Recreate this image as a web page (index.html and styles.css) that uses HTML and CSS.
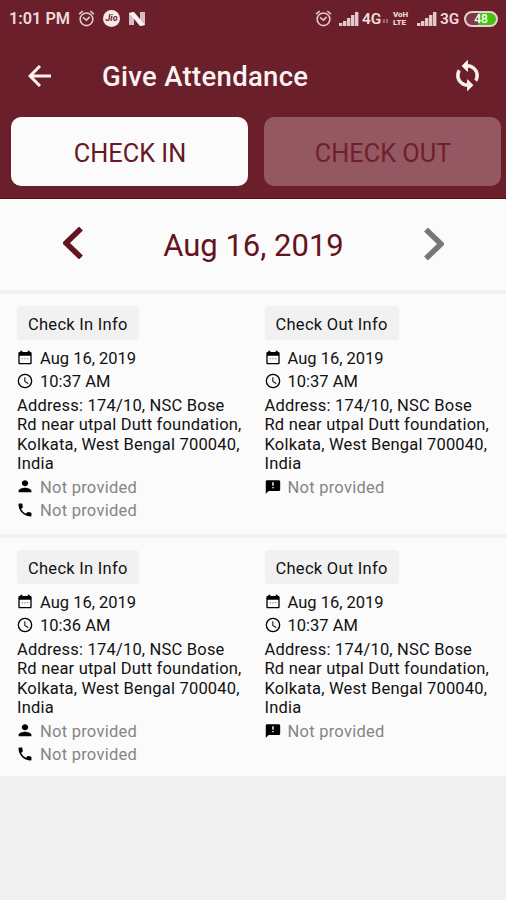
FILE: index.html
```
<!DOCTYPE html>
<html lang="en">
<head>
<meta charset="utf-8">
<title>Give Attendance</title>
<link rel="stylesheet" href="styles.css">
</head>
<body>
<svg class="defs" width="0" height="0">
  <symbol id="alarm" viewBox="0 0 24 24"><path d="M22 5.7l-4.6-3.9-1.3 1.5 4.6 3.9L22 5.7zM7.9 3.4L6.6 1.9 2 5.7l1.3 1.5 4.6-3.8zM12 4a9 9 0 1 0 0 18 9 9 0 0 0 0-18zm0 16a7 7 0 1 1 0-14 7 7 0 0 1 0 14z"/><path d="M7.500 10.500l4.500 3.500 4-4" fill="none" stroke="currentColor" stroke-width="2"/></symbol>
  <symbol id="signal" viewBox="0 0 20 15"><path d="M0 12h3.400v3H0zM4 10h3.400v5H4zM8 7h3.400v8H8zM12 4h3.400v11h-3.400zM16 1h3.400v14h-3.400z"/></symbol>
  <symbol id="calendar" viewBox="0 0 24 24"><path d="M20 3h-1V1h-3v2H8V1H5v2H4c-1.100 0-2 .9-2 2v14.500c0 1.100.9 2 2 2h16c1.100 0 2-.9 2-2V5c0-1.100-.9-2-2-2zm0 16.500H4V8.500h16v11z"/><path d="M7 12h2v2H7zM11 12h2v2h-2zM15 12h2v2h-2z" opacity=".4"/></symbol>
  <symbol id="clock" viewBox="0 0 24 24"><path d="M12 1a11 11 0 1 0 0 22 11 11 0 0 0 0-22zm0 20a9 9 0 1 1 0-18 9 9 0 0 1 0 18zm.5-14.500H11v6.500l5.500 3.400.8-1.300-4.800-2.900z"/></symbol>
  <symbol id="person" viewBox="0 0 24 24"><path d="M12 12c2.200 0 4-1.800 4-4s-1.800-4-4-4-4 1.800-4 4 1.800 4 4 4zm0 2c-2.700 0-8 1.300-8 4v2h16v-2c0-2.700-5.300-4-8-4z" transform="translate(-2.400 -2.500) scale(1.200 1.120)"/></symbol>
  <symbol id="phone" viewBox="0 0 24 24"><path d="M20 15.500c-1.200 0-2.400-.2-3.600-.6-.3-.1-.7 0-1 .2l-2.200 2.200a15 15 0 0 1-6.600-6.600l2.200-2.200c.3-.3.400-.7.200-1-.3-1.100-.5-2.300-.5-3.500 0-.6-.4-1-1-1H4c-.6 0-1 .4-1 1 0 9.400 7.600 17 17 17 .6 0 1-.4 1-1v-3.500c0-.6-.4-1-1-1z" transform="translate(-1 -1) scale(1.080)"/></symbol>
  <symbol id="feedback" viewBox="0 0 24 24"><path d="M20 2H4c-1.100 0-2 .9-2 2v18l4-4h14c1.100 0 2-.9 2-2V4c0-1.100-.9-2-2-2zm-7 12h-2v-2h2v2zm0-4h-2V5h2v5z" transform="translate(-1 0) scale(1.080 1)"/></symbol>
</svg>

<header class="header">
  <div class="status">
    <span class="status-time">1:01 PM</span>
    <svg class="ic-alarm"><use href="#alarm"/></svg>
    <span class="jio">Jio</span>
    <svg class="ic-n" viewBox="0 0 16 14"><path d="M0 1l5-1v13H0z" opacity=".75"/><path d="M11 0h5v13l-5 1z" opacity=".75"/><path d="M0 1l5-1 11 13-5 1z"/></svg>
    <span class="spacer"></span>
    <svg class="ic-alarm right"><use href="#alarm"/></svg>
    <svg class="ic-signal"><use href="#signal"/></svg>
    <span class="net net-4g">4G</span>
    <svg class="activity" viewBox="0 0 6 6"><path d="M0 1h2v4H0zM3 1h2v4H3z"/></svg>
    <span class="volte"><span>VoH</span><span>LTE</span></span>
    <svg class="ic-signal"><use href="#signal"/></svg>
    <span class="net">3G</span>
    <span class="battery">48</span>
  </div>
  <div class="appbar">
    <svg class="back" viewBox="0 0 24 22"><path d="M23 11H2M12 1L2 11l10 10" fill="none" stroke="currentColor" stroke-width="3"/></svg>
    <h1 class="title">Give Attendance</h1>
    <svg class="sync" viewBox="0 0 24 24"><path d="M12 4V1L8 5l4 4V6c3.310 0 6 2.690 6 6 0 1.010-.25 1.970-.7 2.800l1.460 1.460C19.540 15.030 20 13.570 20 12c0-4.420-3.580-8-8-8zm0 14c-3.310 0-6-2.690-6-6 0-1.010.25-1.970.7-2.800L5.240 7.740C4.460 8.970 4 10.430 4 12c0 4.420 3.580 8 8 8v3l4-4-4-4v3z"/></svg>
  </div>
  <div class="actions">
    <button class="action">CHECK IN</button>
    <button class="action disabled">CHECK OUT</button>
  </div>
</header>

<main>
  <nav class="datebar">
    <svg class="chev" viewBox="0 0 20 32"><path d="M18 1.500L3 16l15 14.500" fill="none" stroke="currentColor" stroke-width="5.500"/></svg>
    <span class="date">Aug 16, 2019</span>
    <svg class="chev next" viewBox="0 0 20 32"><path d="M2 1.500L17 16 2 30.500" fill="none" stroke="currentColor" stroke-width="5.500"/></svg>
  </nav>

  <section class="record">
    <div class="col">
      <span class="chip">Check In Info</span>
      <div class="row"><svg><use href="#calendar"/></svg><span>Aug 16, 2019</span></div>
      <div class="row"><svg><use href="#clock"/></svg><span>10:37 AM</span></div>
      <p class="address">Address: 174/10, NSC Bose<br>Rd near utpal Dutt foundation,<br>Kolkata, West Bengal 700040,<br>India</p>
      <div class="row muted"><svg><use href="#person"/></svg><span>Not provided</span></div>
      <div class="row muted"><svg><use href="#phone"/></svg><span>Not provided</span></div>
    </div>
    <div class="col">
      <span class="chip">Check Out Info</span>
      <div class="row"><svg><use href="#calendar"/></svg><span>Aug 16, 2019</span></div>
      <div class="row"><svg><use href="#clock"/></svg><span>10:37 AM</span></div>
      <p class="address">Address: 174/10, NSC Bose<br>Rd near utpal Dutt foundation,<br>Kolkata, West Bengal 700040,<br>India</p>
      <div class="row muted"><svg><use href="#feedback"/></svg><span>Not provided</span></div>
    </div>
  </section>

  <section class="record">
    <div class="col">
      <span class="chip">Check In Info</span>
      <div class="row"><svg><use href="#calendar"/></svg><span>Aug 16, 2019</span></div>
      <div class="row"><svg><use href="#clock"/></svg><span>10:36 AM</span></div>
      <p class="address">Address: 174/10, NSC Bose<br>Rd near utpal Dutt foundation,<br>Kolkata, West Bengal 700040,<br>India</p>
      <div class="row muted"><svg><use href="#person"/></svg><span>Not provided</span></div>
      <div class="row muted"><svg><use href="#phone"/></svg><span>Not provided</span></div>
    </div>
    <div class="col">
      <span class="chip">Check Out Info</span>
      <div class="row"><svg><use href="#calendar"/></svg><span>Aug 16, 2019</span></div>
      <div class="row"><svg><use href="#clock"/></svg><span>10:37 AM</span></div>
      <p class="address">Address: 174/10, NSC Bose<br>Rd near utpal Dutt foundation,<br>Kolkata, West Bengal 700040,<br>India</p>
      <div class="row muted"><svg><use href="#feedback"/></svg><span>Not provided</span></div>
    </div>
  </section>
</main>
</body>
</html>
```
FILE: styles.css
```
* { box-sizing: border-box; }
body {
  margin: 0;
  min-height: 900px;
  background: #f0f0f0;
  font-family: Roboto, "Liberation Sans", sans-serif;
  color: #111;
}
svg { display: block; flex: none; fill: currentColor; }
.defs { position: absolute; }

.header { height: 199px; background: #6a1f2b; color: #fbf3f2; border-bottom: 1px solid #5e0c15; }
.status { display: flex; align-items: center; height: 37px; padding: 0 8px 0 9px; }
.status-time { width: 61px; font-size: 16.300px; font-weight: 600; white-space: nowrap; color: #f0dcdc; }
.ic-alarm { width: 19px; height: 19px; margin-left: 7px; color: #e3c9c9; }
.ic-alarm.right { margin: 0 6px 0 0; }
.jio {
  width: 17px; height: 17px; margin-left: 7px; border-radius: 50%;
  background: #f7e9e9; color: #6a1f2b;
  font-size: 9px; font-weight: 700; font-style: italic; line-height: 17px; text-align: center;
}
.ic-n { width: 16px; height: 14px; margin-left: 9px; }
.spacer { flex: 1; }
.ic-signal { width: 20px; height: 15px; color: #e3c9c9; }
.net { width: 20px; margin: 0 4px 0 3px; font-size: 15.500px; font-weight: 600; color: #f0dcdc; }
.net-4g { margin-right: 1px; }
.activity { width: 6px; height: 6px; color: #9c6a70; margin-top: 5px; }
.volte {
  display: flex; flex-direction: column; width: 17px; margin: 0 7px 0 4px;
  font-size: 8px; font-weight: 900; line-height: 8px; color: #ecd6d6;
}
.battery {
  width: 34px; height: 16px; border: 2px solid #e9cfcf; border-radius: 8px;
  background: linear-gradient(90deg, #7d3a44 0 40%, #42c411 40%);
  color: #fff; font-size: 12px; font-weight: 500; line-height: 12px; text-align: center;
}

.appbar { display: flex; align-items: center; height: 80px; padding: 0 25px 0 28px; }
.back { width: 24px; height: 22px; margin-top: -3px; }
.title { flex: 1; margin: 0 0 0 50px; font-size: 27.500px; font-weight: 500; line-height: 32px; letter-spacing: .3px; }
.sync { width: 33px; height: 33px; margin: -4px -3px 0 0; stroke: currentColor; stroke-width: .6; }

.actions { display: flex; gap: 16px; padding: 0 5px 0 11px; }
.action {
  flex: 1; height: 69px; padding: 3px 0 0 1px; border: 0; border-radius: 10px;
  background: #fbfbfb; color: #671824;
  font: 400 25.300px Roboto, "Liberation Sans", sans-serif;
}
.disabled { background: #935862; color: #701f2d; }

.datebar {
  display: flex; align-items: center; justify-content: space-between;
  height: 95px; padding: 0 62px 0 63px;
  background: #fbfbfb; border-bottom: 4px solid #f1f1f1; color: #641320;
}
.chev { width: 20px; height: 32px; margin-top: -3px; }
.next { color: #777; margin-top: -1px; }
.date { font-size: 31px; font-weight: 400; line-height: 36px; padding-top: 2px; }

.record { display: grid; grid-template-columns: 247.500px 1fr; height: 240px; padding: 12px 0 0 17px; background: #fbfbfb; }
.record + .record { height: 242px; border-top: 4px solid #f1f1f1; }
.col { display: flex; flex-direction: column; align-items: flex-start; font-size: 16.500px; white-space: nowrap; }
.chip {
  height: 34px; margin-bottom: 7px; padding: 0 11px; border-radius: 4px;
  background: #f1f1f1; line-height: 37px; letter-spacing: .27px;
}
.row { display: flex; align-items: center; gap: 6px; height: 23.300px; }
.row svg { width: 16px; height: 16px; margin: -2px 1px 0 0; color: #000; }
.muted { color: #858585; letter-spacing: .25px; }
.address { margin: 2px 0; line-height: 19.600px; letter-spacing: .2px; }
```
